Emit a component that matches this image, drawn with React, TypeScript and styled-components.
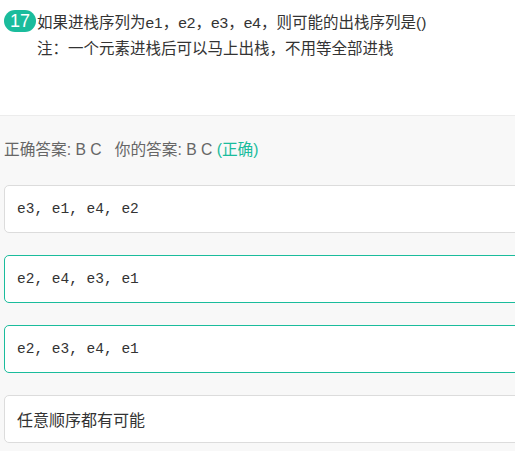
import React from "react";
import styled, { createGlobalStyle } from "styled-components";

const Global = createGlobalStyle`
  html, body { margin: 0; padding: 0; background: #f8f8f8; overflow: hidden; }
  body { font-family: "Liberation Sans", "Noto Sans CJK SC", sans-serif; }
`;

const Page = styled.div`
  width: 640px;
`;

const QuestionArea = styled.div`
  background: #fff;
  border-bottom: 1px solid #ececec;
  height: 116px;
  box-sizing: border-box;
  padding: 10px 0 0 4px;
  display: flex;
  align-items: flex-start;
  gap: 1px;
`;

const Badge = styled.span`
  flex: none;
  width: 32px;
  height: 22px;
  border-radius: 11px;
  background: #1abc9c;
  color: #fff;
  font-size: 18px;
  line-height: 22px;
  text-align: center;
`;

const QuestionText = styled.div`
  color: #333;
  font-size: 15.5px;
  line-height: 26px;
  margin-top: 0;
`;

const Body = styled.div`
  padding: 22px 0 0 4px;
`;

const AnswerLine = styled.div`
  color: #666;
  font-size: 15.7px;
  line-height: 24px;
  margin-bottom: 23px;
`;

const Right = styled.span`
  color: #1abc9c;
`;

const Options = styled.div`
  display: flex;
  flex-direction: column;
  gap: 22px;
`;

const Option = styled.div<{ $selected?: boolean; $mono?: boolean }>`
  height: 48px;
  box-sizing: border-box;
  border: 1px solid ${(p) => (p.$selected ? "#1abc9c" : "#dcdcdc")};
  border-radius: 5px;
  background: #fff;
  display: flex;
  align-items: center;
  padding-left: 12px;
  color: #333;
  font-family: ${(p) =>
    p.$mono ? `"Liberation Mono", monospace` : `"Liberation Sans", "Noto Sans CJK SC", sans-serif`};
  font-size: ${(p) => (p.$mono ? "14.5px" : "16px")};
`;

const options = [
  { text: "e3, e1, e4, e2", selected: false, mono: true },
  { text: "e2, e4, e3, e1", selected: true, mono: true },
  { text: "e2, e3, e4, e1", selected: true, mono: true },
  { text: "任意顺序都有可能", selected: false, mono: false },
];

export default function App() {
  return (
    <Page>
      <Global />
      <QuestionArea>
        <Badge>17</Badge>
        <QuestionText>
          如果进栈序列为e1，e2，e3，e4，则可能的出栈序列是()
          <br />
          注：一个元素进栈后可以马上出栈，不用等全部进栈
        </QuestionText>
      </QuestionArea>
      <Body>
        <AnswerLine>
          正确答案: B C &nbsp; 你的答案: B C <Right>(正确)</Right>
        </AnswerLine>
        <Options>
          {options.map((o) => (
            <Option key={o.text} $selected={o.selected} $mono={o.mono}>
              {o.text}
            </Option>
          ))}
        </Options>
      </Body>
    </Page>
  );
}
